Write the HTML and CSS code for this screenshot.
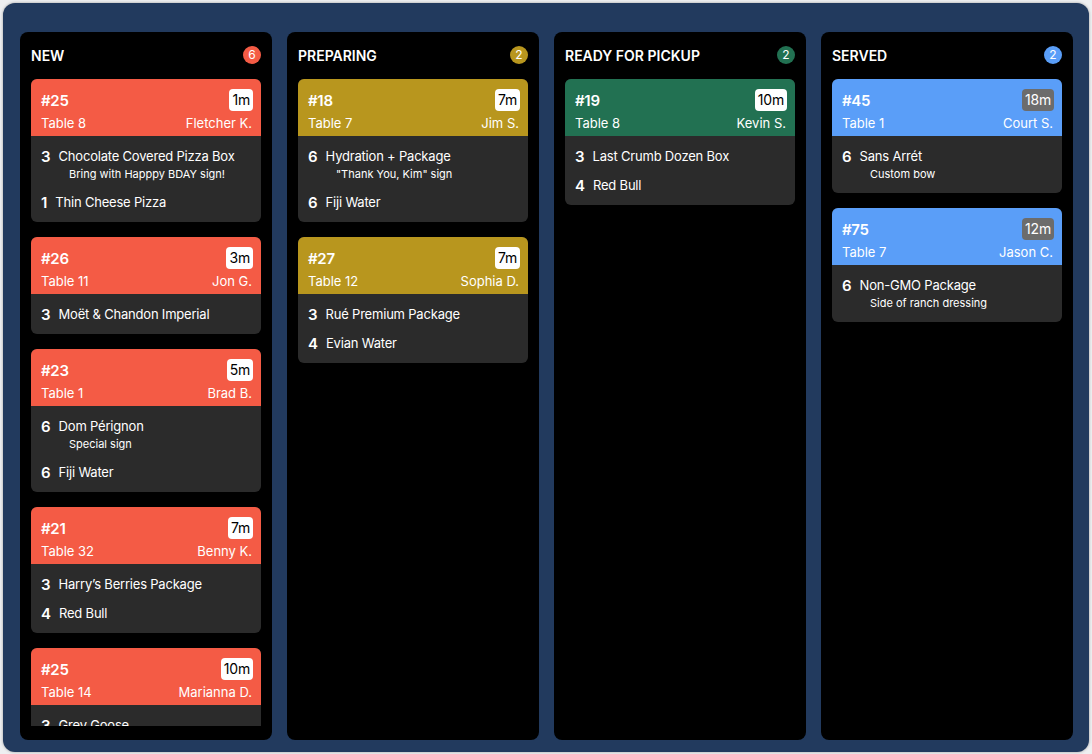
FILE: index.html
```html
<!DOCTYPE html>
<html>
<head>
<meta charset="utf-8">
<link rel="stylesheet" href="styles.css">
</head>
<body>
<div class="frame">
  <section class="col">
    <div class="col-head"><span class="col-title">NEW</span><span class="count c-red">6</span></div>
    <div class="list">
      <div class="card">
        <div class="card-head h-red">
          <div class="row1"><span class="num">#25</span><span class="time">1m</span></div>
          <div class="row2"><span>Table 8</span><span>Fletcher K.</span></div>
        </div>
        <div class="card-body">
          <div class="item"><div class="line"><span class="qty">3</span><span class="name">Chocolate Covered Pizza Box</span></div><div class="note">Bring with Happpy BDAY sign!</div></div>
          <div class="item"><div class="line"><span class="qty">1</span><span class="name">Thin Cheese Pizza</span></div></div>
        </div>
      </div>
      <div class="card">
        <div class="card-head h-red">
          <div class="row1"><span class="num">#26</span><span class="time">3m</span></div>
          <div class="row2"><span>Table 11</span><span>Jon G.</span></div>
        </div>
        <div class="card-body">
          <div class="item"><div class="line"><span class="qty">3</span><span class="name">Moët &amp; Chandon Imperial</span></div></div>
        </div>
      </div>
      <div class="card">
        <div class="card-head h-red">
          <div class="row1"><span class="num">#23</span><span class="time">5m</span></div>
          <div class="row2"><span>Table 1</span><span>Brad B.</span></div>
        </div>
        <div class="card-body">
          <div class="item"><div class="line"><span class="qty">6</span><span class="name">Dom Pérignon</span></div><div class="note">Special sign</div></div>
          <div class="item"><div class="line"><span class="qty">6</span><span class="name">Fiji Water</span></div></div>
        </div>
      </div>
      <div class="card">
        <div class="card-head h-red">
          <div class="row1"><span class="num">#21</span><span class="time">7m</span></div>
          <div class="row2"><span>Table 32</span><span>Benny K.</span></div>
        </div>
        <div class="card-body">
          <div class="item"><div class="line"><span class="qty">3</span><span class="name">Harry’s Berries Package</span></div></div>
          <div class="item"><div class="line"><span class="qty">4</span><span class="name">Red Bull</span></div></div>
        </div>
      </div>
      <div class="card">
        <div class="card-head h-red">
          <div class="row1"><span class="num">#25</span><span class="time">10m</span></div>
          <div class="row2"><span>Table 14</span><span>Marianna D.</span></div>
        </div>
        <div class="card-body">
          <div class="item"><div class="line"><span class="qty">3</span><span class="name">Grey Goose</span></div></div>
        </div>
      </div>
    </div>
  </section>

  <section class="col">
    <div class="col-head"><span class="col-title">PREPARING</span><span class="count c-gold">2</span></div>
    <div class="list">
      <div class="card">
        <div class="card-head h-gold">
          <div class="row1"><span class="num">#18</span><span class="time">7m</span></div>
          <div class="row2"><span>Table 7</span><span>Jim S.</span></div>
        </div>
        <div class="card-body">
          <div class="item"><div class="line"><span class="qty">6</span><span class="name">Hydration + Package</span></div><div class="note">"Thank You, Kim" sign</div></div>
          <div class="item"><div class="line"><span class="qty">6</span><span class="name">Fiji Water</span></div></div>
        </div>
      </div>
      <div class="card">
        <div class="card-head h-gold">
          <div class="row1"><span class="num">#27</span><span class="time">7m</span></div>
          <div class="row2"><span>Table 12</span><span>Sophia D.</span></div>
        </div>
        <div class="card-body">
          <div class="item"><div class="line"><span class="qty">3</span><span class="name">Rué Premium Package</span></div></div>
          <div class="item"><div class="line"><span class="qty">4</span><span class="name">Evian Water</span></div></div>
        </div>
      </div>
    </div>
  </section>

  <section class="col">
    <div class="col-head"><span class="col-title">READY FOR PICKUP</span><span class="count c-green">2</span></div>
    <div class="list">
      <div class="card">
        <div class="card-head h-green">
          <div class="row1"><span class="num">#19</span><span class="time">10m</span></div>
          <div class="row2"><span>Table 8</span><span>Kevin S.</span></div>
        </div>
        <div class="card-body">
          <div class="item"><div class="line"><span class="qty">3</span><span class="name">Last Crumb Dozen Box</span></div></div>
          <div class="item"><div class="line"><span class="qty">4</span><span class="name">Red Bull</span></div></div>
        </div>
      </div>
    </div>
  </section>

  <section class="col">
    <div class="col-head"><span class="col-title">SERVED</span><span class="count c-blue">2</span></div>
    <div class="list">
      <div class="card">
        <div class="card-head h-blue">
          <div class="row1"><span class="num">#45</span><span class="time time-done">18m</span></div>
          <div class="row2"><span>Table 1</span><span>Court S.</span></div>
        </div>
        <div class="card-body">
          <div class="item"><div class="line"><span class="qty">6</span><span class="name">Sans Arrét</span></div><div class="note">Custom bow</div></div>
        </div>
      </div>
      <div class="card">
        <div class="card-head h-blue">
          <div class="row1"><span class="num">#75</span><span class="time time-done">12m</span></div>
          <div class="row2"><span>Table 7</span><span>Jason C.</span></div>
        </div>
        <div class="card-body">
          <div class="item"><div class="line"><span class="qty">6</span><span class="name">Non-GMO Package</span></div><div class="note">Side of ranch dressing</div></div>
        </div>
      </div>
    </div>
  </section>
</div>
</body>
</html>
```

FILE: styles.css
```css
* { box-sizing: border-box; }
html, body { margin: 0; padding: 0; }
body {
  background: #eeeff1;
  font-family: Inter, "Noto Sans", sans-serif;
  color: #fff;
  width: 1092px;
  height: 754px;
  overflow: hidden;
}
.frame {
  margin: 3px 0 0 3px;
  width: 1086px;
  height: 749px;
  background: #223a5e;
  border-radius: 12px;
  box-shadow: 0 0 3px rgba(0,0,0,0.35);
  padding: 29px 16px 12px 17px;
  display: grid;
  grid-template-columns: repeat(4, 252px);
  column-gap: 15px;
}
.col {
  background: #000;
  border-radius: 8px;
  padding: 13px 11px 14px;
  display: flex;
  flex-direction: column;
  min-height: 0;
  overflow: hidden;
}
.col-head {
  height: 20px;
  margin-bottom: 14px;
  display: flex;
  align-items: center;
  justify-content: space-between;
  flex-shrink: 0;
}
.col-title {
  font-size: 14px;
  font-weight: 600;
}
.count {
  width: 18px;
  height: 18px;
  border-radius: 50%;
  font-size: 12px;
  line-height: 18px;
  text-align: center;
}
.c-red { background: #f45b45; }
.c-gold { background: #b8961e; }
.c-green { background: #227152; }
.c-blue { background: #5a9ef8; }
.list {
  flex: 1;
  min-height: 0;
  overflow: hidden;
  display: flex;
  flex-direction: column;
  gap: 15px;
}
.card {
  border-radius: 6px;
  overflow: hidden;
  flex-shrink: 0;
  background: #2b2b2b;
}
.card-head {
  height: 57px;
  padding: 10px 8px 4px 10px;
}
.h-red { background: #f45b45; }
.h-gold { background: #b8961e; }
.h-green { background: #227152; }
.h-blue { background: #5a9ef8; }
.row1 {
  height: 22px;
  display: flex;
  align-items: center;
  justify-content: space-between;
}
.num {
  font-size: 15px;
  font-weight: 600;
  letter-spacing: -0.3px;
}
.time {
  background: #fff;
  color: #000;
  font-size: 14px;
  height: 22px;
  line-height: 22px;
  padding: 0 3px;
  border-radius: 4px;
  letter-spacing: -0.2px;
}
.time-done {
  background: #6c6c6c;
  color: #fff;
}
.row2 {
  margin-top: 3px;
  height: 18px;
  display: flex;
  align-items: center;
  justify-content: space-between;
  font-size: 13px;
  padding-right: 1px;
}
.card-body {
  padding: 11px 10px 11px;
  display: flex;
  flex-direction: column;
  gap: 11px;
}
.line {
  height: 18px;
  display: flex;
  align-items: center;
}
.qty {
  font-size: 15px;
  font-weight: 600;
  margin-right: 8px;
}
.name {
  font-size: 13px;
  letter-spacing: -0.2px;
}
.note {
  margin-top: 1px;
  padding-left: 28px;
  font-size: 11px;
  line-height: 16px;
}
```
